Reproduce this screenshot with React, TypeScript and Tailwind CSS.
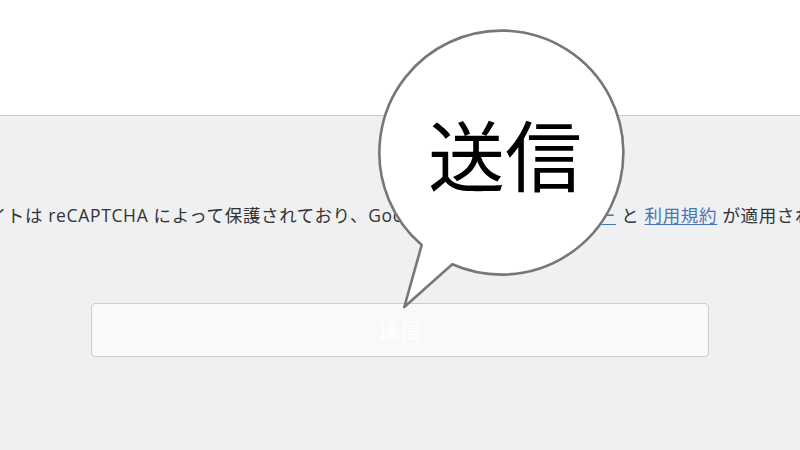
export default function App() {
  return (
    <div
      className="relative w-[800px] h-[450px] overflow-hidden flex flex-col bg-white"
      style={{ fontFamily: '"Open Sans", "Noto Sans CJK JP", sans-serif' }}
    >
      {/* header area */}
      <div className="h-[116px] shrink-0 bg-white border-b border-[#cccccc]" />

      {/* form area */}
      <div className="flex-1 bg-[#eff0f2] flex flex-col pt-[87px]">
        <div className="flex justify-center h-[24px] items-center">
          <p className="whitespace-nowrap shrink-0 text-[17.5px] leading-[24px] tracking-[0.65px] text-[#333333]">
            このサイトは reCAPTCHA によって保護されており、Google{" "}
            <a href="#" className="text-[#4a74b4] underline underline-offset-2">
              プライバシーポリシー
            </a>{" "}
            と{" "}
            <a href="#" className="text-[#4a74b4] underline underline-offset-2">
              利用規約
            </a>{" "}
            が適用されます。
          </p>
        </div>

        <button
          type="button"
          className="mt-[76px] ml-[91px] w-[618px] h-[54px] rounded-[4px] border border-[#cccccc] bg-[#f9f9f9] text-white text-[21px] flex items-center justify-center"
          style={{ fontFamily: '"Noto Sans CJK JP", sans-serif' }}
        >
          送信
        </button>
      </div>

      {/* speech bubble callout */}
      <div className="absolute inset-0 pointer-events-none">
        <svg width="800" height="450" viewBox="0 0 800 450" className="absolute inset-0">
          <path
            d="M 452.3 264.3 A 122 122 0 1 0 421.7 245 L 404.3 307 Z"
            fill="#ffffff"
            stroke="#777777"
            strokeWidth="2.6"
            strokeLinejoin="round"
          />
        </svg>
        <div
          className="absolute left-[383px] top-[30px] w-[244px] h-[244px] flex items-center justify-center"
          style={{ fontFamily: '"Noto Sans CJK JP", sans-serif' }}
        >
          <span className="text-[77px] leading-none text-black">送信</span>
        </div>
      </div>
    </div>
  );
}
